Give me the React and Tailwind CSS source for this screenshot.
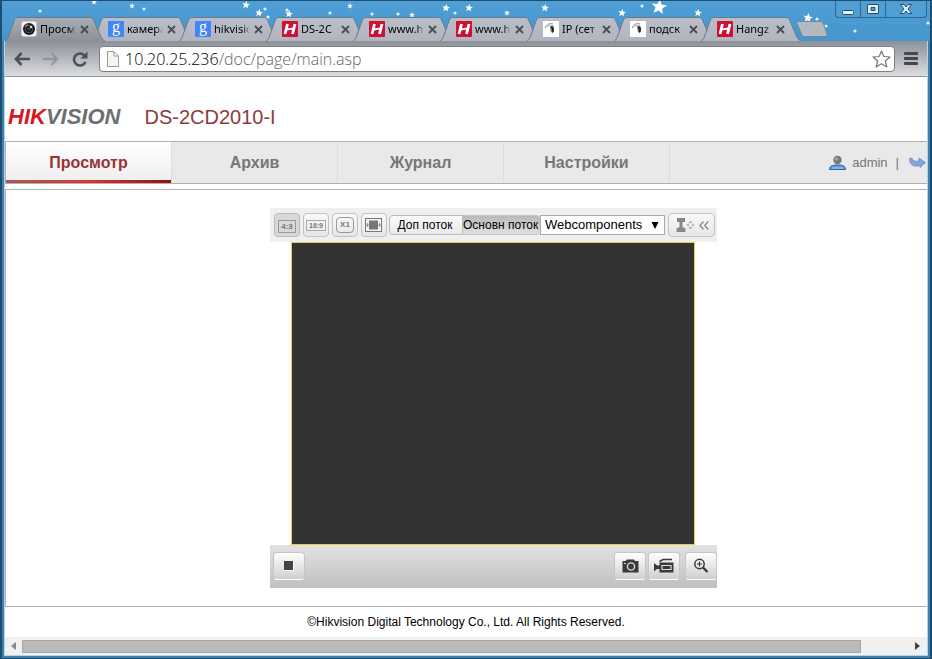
import React from 'react';
import clsx from 'clsx';

const tabs = [
  { title: 'Просмо', icon: 'lens' },
  { title: 'камера', icon: 'google' },
  { title: 'hikvisio', icon: 'google' },
  { title: 'DS-2C', icon: 'hik' },
  { title: 'www.h', icon: 'hik' },
  { title: 'www.h', icon: 'hik' },
  { title: 'IP (сет', icon: 'cam' },
  { title: 'подск', icon: 'cam' },
  { title: 'Hangz', icon: 'hik' },
];

const menu = ['Просмотр', 'Архив', 'Журнал', 'Настройки'];

const dots = [
  [38, 10], [142, 8], [263, 8], [266, 16], [285, 9], [328, 12], [370, 13], [396, 13],
  [453, 12], [640, 5], [815, 18], [824, 25], [853, 30], [926, 22],
];

const stars = [
  [92, 1, 3], [130, 5, 3], [244, 4, 4], [257, 12, 4], [287, 13, 4], [348, 5, 3], [410, 14, 3], [444, 7, 4],
  [467, 7, 4], [505, 12, 3], [543, 7, 4], [620, 12, 4], [657, 6, 8], [696, 12, 4], [806, 17, 5],
];

function Sky() {
  return (
    <svg className="absolute left-0 top-0" width="928" height="40" fill="#fff" aria-hidden="true">
      {dots.map(([x, y]) => (
        <circle key={`${x}-${y}`} cx={x} cy={y} r="1.6" opacity="0.85" />
      ))}
      {stars.map(([x, y, r]) => (
        <path
          key={`${x}-${y}`}
          d="M0-1 .26-.35.95-.31.42.13.59.81 0 .44-.59.81-.42.13-.95-.31-.26-.35Z"
          transform={`translate(${x} ${y}) rotate(8) scale(${r})`}
        />
      ))}
    </svg>
  );
}

function Favicon({ icon }) {
  if (icon === 'google') {
    return (
      <span className="flex size-4 shrink-0 items-center justify-center rounded-[1px] bg-[#4285f4] pb-1 font-['Liberation_Serif',serif] text-base leading-none text-white">
        g
      </span>
    );
  }
  if (icon === 'hik') {
    return (
      <svg className="size-4 shrink-0" viewBox="0 0 16 16">
        <rect width="16" height="16" rx="1" fill="#d00f33" />
        <path d="M5.500 3 3 13M13 3 10.500 13" stroke="#fff" strokeWidth="2.800" />
        <path d="M4 8.500 12 7.500" stroke="#fff" strokeWidth="2" />
      </svg>
    );
  }
  if (icon === 'cam') {
    return (
      <svg className="size-4 shrink-0 bg-white" viewBox="0 0 16 16">
        <path d="M2.500 7C3 3 7 2 10 3" stroke="#888" fill="none" />
        <path d="M4 5.500 7 4" stroke="#aaa" />
        <path d="M7 4.500h3c1.500 1 1.500 6-.5 8L7.500 10Z" fill="#777" />
        <path d="M8 6.500c2 0 2.800 2 1.500 4.500" stroke="#111" strokeWidth="1.500" fill="none" />
      </svg>
    );
  }
  return (
    <svg className="size-4 shrink-0" viewBox="0 0 16 16">
      <rect x=".5" y=".5" width="15" height="15" rx="2" fill="#f2f2f2" />
      <circle cx="8" cy="8" r="6" fill="#161616" />
      <circle cx="8" cy="8" r="3.800" fill="none" stroke="#555" />
      <circle cx="8" cy="8" r="1.800" fill="#2b4d50" />
      <path d="M4 5.500 7 3.500" stroke="#d66" strokeWidth="1.500" />
      <circle cx="10" cy="6" r="1.200" fill="#ddd" />
    </svg>
  );
}

function Tab({ title, icon, active }) {
  return (
    <div className={clsx('relative -mr-[13px] h-6 w-[100px]', active && 'z-10')}>
      <svg className="absolute inset-0" width="100" height="24" viewBox="0 0 100 24" aria-hidden="true">
        <defs>
          <linearGradient id="tab-on" x2="0" y2="1">
            <stop stopColor="#a9adb5" />
            <stop offset="1" stopColor="#8c9199" />
          </linearGradient>
          <linearGradient id="tab-off" x2="0" y2="1">
            <stop stopColor="#b9bec8" />
            <stop offset="1" stopColor="#b0b5bf" />
          </linearGradient>
        </defs>
        <path
          d="M0 24C2 23 3 21 4 18L9 4C10 1.500 11 .5 13 .5H85C87 .5 88 1.500 89 4L95 18C96 21 98 23 100 24Z"
          fill={active ? 'url(#tab-on)' : 'url(#tab-off)'}
        />
        <path
          d="M0 24C2 23 3 21 4 18L9 4C10 1.500 11 .5 13 .5H85C87 .5 88 1.500 89 4L95 18C96 21 98 23 100 24"
          fill="none"
          stroke="#69798c"
        />
      </svg>
      <div className="relative flex h-6 items-center pl-4 text-black">
        <Favicon icon={icon} />
        <span className="ml-[3px] w-[36px] overflow-hidden whitespace-nowrap font-['Noto_Sans',sans-serif] text-[11px] leading-4 tracking-normal [mask-image:linear-gradient(to_right,#000_80%,transparent)]">
          {title}
        </span>
        <button type="button" aria-label="Закрыть" className="ml-1">
          <svg width="9" height="9" viewBox="0 0 9 9" stroke="#4a4d52" strokeWidth="1.800">
            <path d="M1 1 8 8M8 1 1 8" />
          </svg>
        </button>
      </div>
    </div>
  );
}

function WindowControls() {
  return (
    <div className="absolute right-[3px] top-0 flex h-[17px] rounded-b border border-t-0 border-[#2b6796] bg-[#4f9fd3]">
      <button type="button" aria-label="Свернуть" className="flex w-[25px] items-center justify-center border-r border-[#2b6796]">
        <svg width="12" height="12" viewBox="0 0 12 12">
          <rect x=".5" y="7.500" width="11" height="4" rx="1" fill="#dff1fb" stroke="#25506f" />
        </svg>
      </button>
      <button type="button" aria-label="Развернуть" className="flex w-[25px] items-center justify-center border-r border-[#2b6796]">
        <svg width="12" height="12" viewBox="0 0 12 12">
          <path d="M.5 1.500h11v9H.5zM4 4.500h4v3H4z" fill="#dff1fb" stroke="#25506f" fillRule="evenodd" />
        </svg>
      </button>
      <button type="button" aria-label="Закрыть окно" className="flex w-10 items-center justify-center">
        <svg width="12" height="12" viewBox="0 0 12 12">
          <path
            d="M.5 1.500H4L6 4 8 1.500h3.500L8 6l3.500 4.500H8L6 8l-2 2.500H.5L4 6Z"
            fill="#dff1fb"
            stroke="#25506f"
          />
        </svg>
      </button>
    </div>
  );
}

function AddressBar() {
  return (
    <div className="flex h-9 items-center border-b border-[#8f9296] bg-linear-to-b from-[#8c9199] to-[#dcdddf] pr-[9px]">
      <div className="flex w-[94px] items-center gap-[11px] pl-2">
        <button type="button" aria-label="Назад">
          <svg width="18" height="16" viewBox="0 0 18 16" fill="none" stroke="#4b5158" strokeWidth="2.600">
            <path d="M8.500 2 3 8l5.500 6M3 8h14" />
          </svg>
        </button>
        <button type="button" aria-label="Вперёд">
          <svg width="18" height="16" viewBox="0 0 18 16" fill="none" stroke="#92979d" strokeWidth="2.400">
            <path d="M9.500 2 15 8l-5.500 6M15 8H1" />
          </svg>
        </button>
        <button type="button" aria-label="Обновить">
          <svg width="17" height="16" viewBox="0 0 17 16" fill="none" stroke="#4b5158" strokeWidth="2.600">
            <path d="M14.500 11A6 6 0 1 1 13.500 4.500" />
            <path d="M16.500 .5V7.500H9.500Z" fill="#4b5158" stroke="none" />
          </svg>
        </button>
      </div>
      <div className="flex h-[26px] min-w-0 flex-1 items-center rounded-sm border border-[#7c8085] bg-white px-[7px]">
        <svg width="12" height="16" viewBox="0 0 12 16" fill="#f4f4f4" stroke="#999">
          <path d="M.5.5H7l4.500 4.500v10.500H.5ZM7 .5V5h4.500" />
        </svg>
        <div className="ml-[6px] flex-1 font-['Open_Sans',sans-serif] text-base font-light leading-6 text-[#666]">
          <span className="text-black">10.20.25.236</span>/doc/page/main.asp
        </div>
        <button type="button" aria-label="Закладка" className="-mr-1">
          <svg width="19" height="18" viewBox="0 0 19 18" fill="#fff" stroke="#777" strokeWidth="1.200">
            <path d="M9.500 1 11.800 6.500 18 7 13.300 11 14.800 17 9.500 13.800 4.200 17 5.700 11 1 7 7.200 6.500Z" strokeLinejoin="round" />
          </svg>
        </button>
      </div>
      <button type="button" aria-label="Меню" className="ml-[9px]">
        <svg width="14" height="14" viewBox="0 0 14 14" fill="#43484e">
          <rect y="0" width="14" height="3" rx="1" />
          <rect y="5" width="14" height="3" rx="1" />
          <rect y="10" width="14" height="3" rx="1" />
        </svg>
      </button>
    </div>
  );
}

function SizeButton({ label, pressed, children }) {
  return (
    <button
      type="button"
      aria-label={label}
      className={clsx(
        'flex h-6 w-[26px] items-center justify-center rounded-sm border',
        pressed ? 'border-[#bbb] bg-[#d8d8d8]' : 'border-[#c2c2c2] bg-linear-to-b from-[#fafafa] to-[#e6e6e6]'
      )}
    >
      {children}
    </button>
  );
}

function PlayerButton({ label, children }) {
  return (
    <button
      type="button"
      aria-label={label}
      className="flex h-7 w-8 items-center justify-center rounded-sm border border-[#c6c6c6] border-b-white bg-linear-to-b from-white to-[#cfcfcf]"
    >
      {children}
    </button>
  );
}

function Player() {
  return (
    <div className="w-[447px]">
      <div className="flex h-[34px] items-center bg-[#efefef] pl-1 text-xs text-black">
        <div className="flex gap-[3px]">
          <SizeButton label="4:3" pressed>
            <span className="mt-[3px] flex h-[13px] w-[18px] items-center justify-center border border-[#999] text-[8px] font-bold leading-none text-[#777]">
              4:3
            </span>
          </SizeButton>
          <SizeButton label="16:9">
            <span className="flex h-[11px] w-5 items-center justify-center border border-[#aaa] text-[7px] font-bold leading-none text-[#777]">
              16:9
            </span>
          </SizeButton>
          <SizeButton label="X1">
            <span className="flex h-4 w-[18px] items-center justify-center rounded-sm border border-[#999] text-[8px] font-bold leading-none text-[#777]">
              X1
            </span>
          </SizeButton>
          <SizeButton label="Авто">
            <svg width="18" height="14" viewBox="0 0 18 14">
              <rect x=".5" y=".5" width="16" height="13" fill="#f4f4f4" stroke="#777" />
              <rect x="4" y="2.500" width="9" height="9" fill="#777" />
              <path d="M1 7H4M13 7H16M2.500 5v4M14.500 5v4" stroke="#777" strokeWidth=".7" />
            </svg>
          </SizeButton>
        </div>
        <button
          type="button"
          className="ml-[2px] h-5 w-[74px] whitespace-nowrap rounded-l-sm border border-[#bbb] bg-linear-to-b from-[#fafafa] to-[#e9e9e9] pr-[2px] text-center"
        >
          Доп поток
        </button>
        <button
          type="button"
          className="flex h-5 w-[77px] items-center whitespace-nowrap rounded-r-sm border-y border-[#c4c4c4] bg-linear-to-b from-[#b9b9b9] to-[#e0e0e0]"
        >
          Основн поток
        </button>
        <select
          aria-label="Плагин"
          defaultValue="Webcomponents"
          className="h-5 w-[125px] appearance-none border border-[#a9a9a9] bg-white pl-1 text-[13px] leading-4"
        >
          <option>Webcomponents</option>
        </select>
        <svg className="pointer-events-none relative -ml-[14px] mr-[6px]" width="8" height="7" viewBox="0 0 8 7">
          <path d="M.5 0h7L4 7Z" />
        </svg>
        <button
          type="button"
          aria-label="PTZ"
          className="ml-[3px] flex h-6 w-[47px] items-center justify-center gap-1 rounded-sm border border-[#c2c2c2] bg-linear-to-b from-[#fafafa] to-[#e6e6e6]"
        >
          <svg width="20" height="14" viewBox="0 0 20 14" fill="#888">
            <path d="M2 0h8v4H7.500v5L10.500 10.500V14H1.500V10.500L4.500 9V4H2Z" />
            <path d="M15.500 2.500 17.200 5h-3.400ZM15.500 11.500 17.200 9h-3.400ZM11.500 7l2.300-1.700v3.400ZM19.500 7l-2.300-1.700v3.400Z" fill="#aaa" />
          </svg>
          <svg width="10" height="9" viewBox="0 0 10 9" fill="none" stroke="#888" strokeWidth="1.300">
            <path d="M4.500 .5.900 4.500l3.600 4M9.300.5 5.700 4.500l3.600 4" />
          </svg>
        </button>
      </div>

      <div className="ml-[21px] mr-[22px] aspect-[404/303] border border-[#e5cf4a] bg-[#333]" />

      <div className="flex h-[43px] items-start bg-linear-to-b from-[#e2e2e2] to-[#c0c0c0] pl-[3px] pt-[7px]">
        <PlayerButton label="Стоп">
          <svg width="10" height="10" viewBox="0 0 10 10">
            <rect width="10" height="10" fill="#fff" />
            <rect width="9" height="9" fill="#444" />
          </svg>
        </PlayerButton>
        <div className="ml-auto flex gap-[2px]">
          <PlayerButton label="Снимок">
            <svg width="17" height="14" viewBox="0 0 17 14">
              <path d="M.5 2h3L5 .5h7L13 2h3.500v11.500H.5Z" fill="#3a3a3a" />
              <circle cx="9" cy="7.500" r="3.600" fill="#3a3a3a" stroke="#ddd" strokeWidth="1.400" />
              <path d="M2 4.500h2" stroke="#ddd" />
            </svg>
          </PlayerButton>
          <PlayerButton label="Запись">
            <svg width="20" height="16" viewBox="0 0 20 16">
              <path d="M0 5 3 7.500H5.500V4.500H19.500V14.500H5.500V11H3L0 13.500Z" fill="#3a3a3a" />
              <path d="M8 7.500h9v4H8Z" fill="#3a3a3a" stroke="#ddd" strokeWidth="1.200" />
              <path d="M5.500 3.500 9 1.500h9" fill="none" stroke="#3a3a3a" strokeWidth="1.500" />
            </svg>
          </PlayerButton>
        </div>
        <div className="ml-[5px]">
          <PlayerButton label="Увеличить">
            <svg width="16" height="16" viewBox="0 0 16 16" fill="none" stroke="#3a3a3a">
              <circle cx="6.500" cy="6" r="4.700" strokeWidth="1.500" />
              <path d="M4 6h5M6.500 3.500v5" strokeWidth="1.200" />
              <path d="m10 9.500 4.500 4.500" strokeWidth="2.400" />
            </svg>
          </PlayerButton>
        </div>
      </div>
    </div>
  );
}

export default function App() {
  return (
    <div className="flex min-h-screen flex-col border-x-2 border-b border-t border-[#1f4d6e] bg-[#3d80b3] font-['Liberation_Sans',sans-serif]">
      {/* Tab strip */}
      <div className="relative flex h-10 bg-linear-to-b from-[#4f9fd6] to-[#4596cd] pl-[3px] pt-4">
        <Sky />
        {tabs.map((tab, i) => (
          <Tab key={i} {...tab} active={i === 0} />
        ))}
        <button type="button" aria-label="Новая вкладка" className="relative ml-2 mt-1 h-4">
          <svg width="32" height="16" viewBox="0 0 32 16">
            <path d="M2 .5H24C26 .5 27 1.500 27.500 3L31 13C31.500 15 31 15.500 29 15.500H9C7 15.500 6 14.500 5.500 13L1 2.500C.5 1 1 .5 2 .5Z" fill="#b3b8c1" stroke="#6f879f" />
          </svg>
        </button>
        <WindowControls />
      </div>

      <div className="mx-[2px] mb-[2px] flex flex-1 flex-col border-x border-b border-[#b9d3e6] bg-white">
        <AddressBar />

        <header className="flex h-16 items-center pl-[3px] pt-4">
          <div className="text-[22px] font-bold italic leading-6 text-[#6d7073]">
            <span className="text-[#d7191f]">HIK</span>VISION
          </div>
          <h1 className="ml-6 text-xl leading-6 text-[#8e3b3b]">DS-2CD2010-I</h1>
        </header>

        <nav className="flex h-[43px] border-y border-l border-[#b0b0b0] bg-[#e9e9e9]">
          {menu.map((item, i) => (
            <a
              key={item}
              href="#"
              className={clsx(
                'relative flex w-[166px] items-center justify-center border-r border-[#dcdcdc] text-base font-bold',
                i === 0 ? 'bg-linear-to-b from-white to-[#eeeeee] text-[#9a3434]' : 'text-[#777]'
              )}
            >
              {item}
              {i === 0 && (
                <span className="absolute inset-x-0 bottom-0 h-[3px] bg-linear-to-r from-[#a55] via-[#d23a30] to-[#8c1512]" />
              )}
            </a>
          ))}
          <div className="ml-auto flex items-center pr-px text-[13px] text-[#777]">
            <svg width="17" height="16" viewBox="0 0 17 16">
              <path d="M.5 14.500c0-3 2-4 5-4.500h6c3 .5 5 1.500 5 4.500Z" fill="#5b9be0" stroke="#2f66ad" />
              <path d="M3 13h11" stroke="#a9d0f7" />
              <circle cx="8.500" cy="5" r="4.200" fill="#777" />
              <circle cx="7.500" cy="4" r="1.800" fill="#a2a2a2" />
            </svg>
            <span className="ml-[6px]">admin</span>
            <span className="mx-2">|</span>
            <a href="#" aria-label="Выход" className="ml-[2px]">
              <svg width="17" height="13" viewBox="0 0 17 13">
                <path d="M.5 2.500 3 2C3.500 5 6 5.500 10 5V2L16.500 6.500 11 11.500V9.500C5 11.500 .5 9 .5 2.500Z" fill="#86a5dc" stroke="#6483bf" strokeWidth=".7" />
              </svg>
            </a>
          </div>
        </nav>

        <main className="mt-[5px] flex flex-1 justify-center border-y border-l border-[#b0b0b0] pb-[18px] pl-[54px] pt-[18px]">
          <Player />
        </main>

        <footer className="flex h-[30px] items-center justify-center text-xs text-black">
          ©Hikvision Digital Technology Co., Ltd. All Rights Reserved.
        </footer>

        {/* Horizontal scrollbar */}
        <div className="flex h-[18px] items-center bg-[#f0f0f0]">
          <svg className="mx-[6px]" width="5" height="8" viewBox="0 0 5 8" fill="#8a8a8a">
            <path d="M5 0v8L0 4Z" />
          </svg>
          <div className="mr-[54px] h-[13px] flex-1 border border-[#a6a6a6] bg-[#bababa]" />
          <svg className="mr-[7px]" width="5" height="8" viewBox="0 0 5 8" fill="#444">
            <path d="M0 0v8L5 4Z" />
          </svg>
        </div>
      </div>
    </div>
  );
}
